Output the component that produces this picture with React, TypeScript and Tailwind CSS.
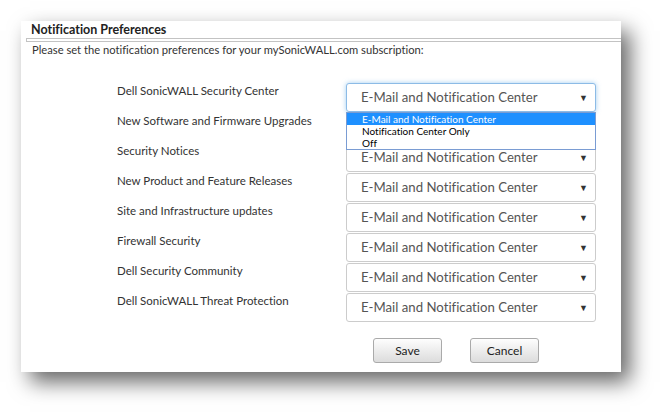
import { useState } from "react";

const topics = [
  "Dell SonicWALL Security Center",
  "New Software and Firmware Upgrades",
  "Security Notices",
  "New Product and Feature Releases",
  "Site and Infrastructure updates",
  "Firewall Security",
  "Dell Security Community",
  "Dell SonicWALL Threat Protection",
];

const options = ["E-Mail and Notification Center", "Notification Center Only", "Off"];

function SelectBox({ value, focused, covered }: { value: string; focused?: boolean; covered?: boolean }) {
  return (
    <div
      className={
        "relative flex h-[29px] w-[250px] shrink-0 items-center rounded-[3px] border bg-white pl-[14px] pt-[1px] text-[13.2px] text-[#555] " +
        (focused
          ? "border-[#8cbbe6] shadow-[0_0_5px_rgba(102,175,233,0.6)]"
          : "border-[#cccccc]")
      }
    >
      {/* the list of the open select lies over this one */}
      <span className={"leading-none " + (covered ? "invisible" : "")}>{value}</span>
      <span className="absolute right-[7px] top-[9px] text-[9px] leading-none text-[#333]">▼</span>
    </div>
  );
}

export default function App() {
  const [open] = useState(true);

  return (
    <div className="h-[414px] w-[663px] bg-white pl-[21px] pt-[21px] font-['Lato','Liberation_Sans',sans-serif] [font-variant-ligatures:none]">
      <div className="relative flex h-[351px] w-[600px] flex-col bg-white shadow-[9px_10px_20px_rgba(0,0,0,0.6)]">
        {/* header */}
        <div className="pl-[10px] pt-[1px] text-[12.5px] font-bold leading-[15px] text-[#222]">
          Notification Preferences
        </div>
        <div className="ml-[5px] mt-[1px] h-[4px] border border-r-0 border-[#c3c3c3]" />
        <div className="pl-[11px] pt-[1px] text-[11.2px] leading-[14px] text-[#333]">
          Please set the notification preferences for your mySonicWALL.com subscription:
        </div>

        {/* rows */}
        <div className="mt-[26px] flex flex-col gap-[1px]">
          {topics.map((t, i) => (
            <div key={t} className="flex items-start">
              <div className="mt-[1px] w-[325px] shrink-0 pl-[96px] text-[11.5px] leading-[14px] whitespace-nowrap text-[#333]">
                {t}
              </div>
              <SelectBox value={options[0]} focused={i === 0} covered={open && i === 1} />
            </div>
          ))}
        </div>

        {/* buttons */}
        <div className="mt-[16px] flex gap-[28px] pl-[352px]">
          <button className="h-[25px] w-[69px] rounded-[3px] border border-[#aaaaaa] bg-gradient-to-b from-[#fefefe] to-[#dcdcdc] text-[12px] text-[#222]">
            Save
          </button>
          <button className="h-[25px] w-[69px] rounded-[3px] border border-[#aaaaaa] bg-gradient-to-b from-[#fefefe] to-[#dcdcdc] text-[12px] text-[#222]">
            Cancel
          </button>
        </div>

        {/* open dropdown list */}
        {open && (
          <div className="absolute left-[325px] top-[91px] flex h-[38px] w-[250px] flex-col border border-[#7a9cd3] bg-white text-[10px] leading-[12px] text-black">
            {options.map((o, i) => (
              <div
                key={o}
                className={"h-[12px] pl-[15px] " + (i === 0 ? "bg-[#1e90ff] text-white" : "")}
              >
                {o}
              </div>
            ))}
          </div>
        )}
      </div>
    </div>
  );
}
